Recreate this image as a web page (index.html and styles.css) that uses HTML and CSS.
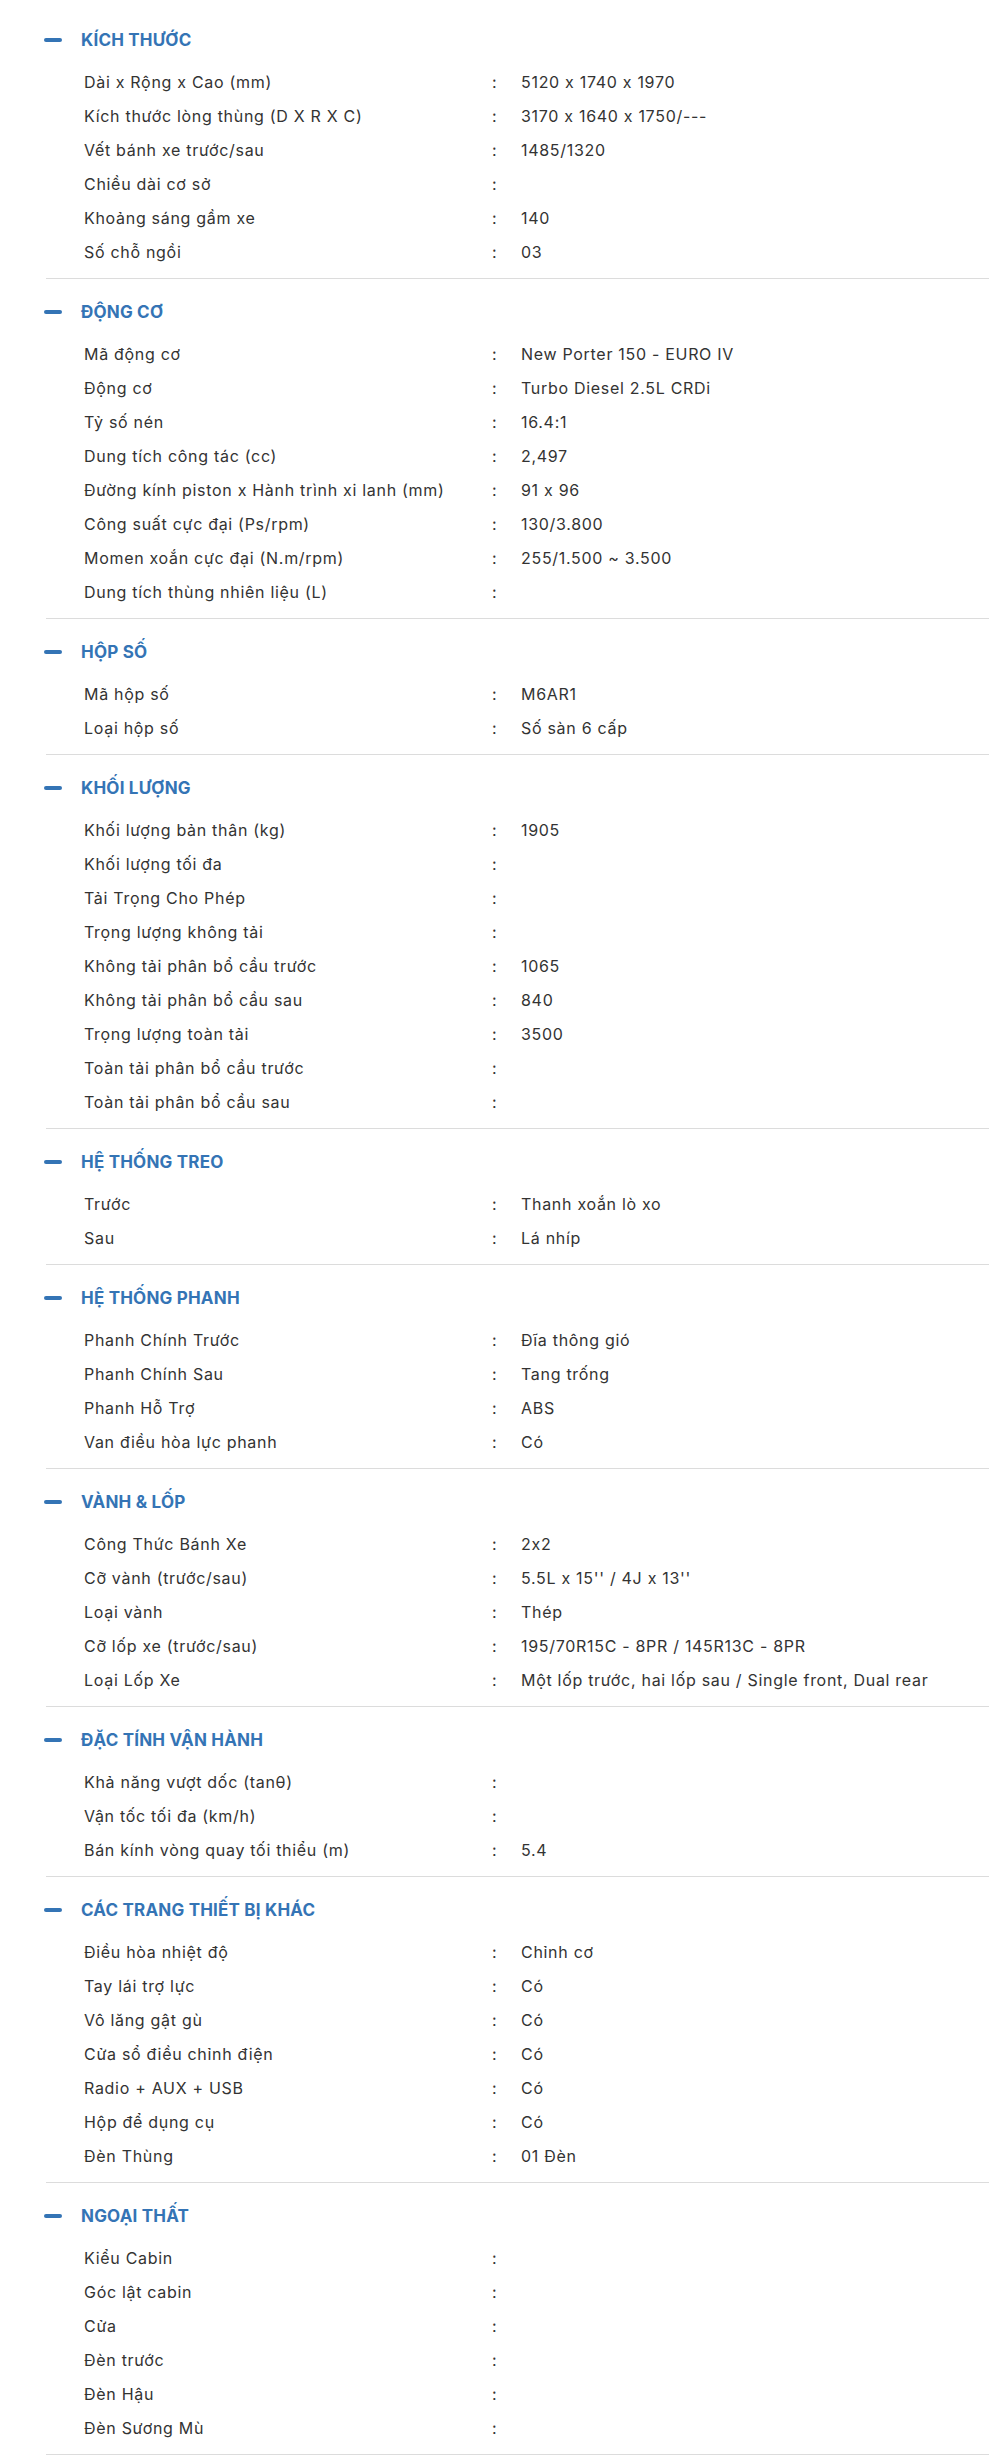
FILE: index.html
```html
<!DOCTYPE html>
<html lang="vi">
<head>
<meta charset="utf-8">
<title>Thông số kỹ thuật</title>
<link rel="stylesheet" href="styles.css">
</head>
<body>
<div class="specs">
  <section class="spec">
    <h2 class="spec-title"><span class="dash"></span>KÍCH THƯỚC</h2>
    <dl class="rows">
      <div class="row"><dt>Dài x Rộng x Cao (mm)</dt><dd>5120 x 1740 x 1970</dd></div>
      <div class="row"><dt>Kích thước lòng thùng (D X R X C)</dt><dd>3170 x 1640 x 1750/---</dd></div>
      <div class="row"><dt>Vết bánh xe trước/sau</dt><dd>1485/1320</dd></div>
      <div class="row"><dt>Chiều dài cơ sở</dt><dd></dd></div>
      <div class="row"><dt>Khoảng sáng gầm xe</dt><dd>140</dd></div>
      <div class="row"><dt>Số chỗ ngồi</dt><dd>03</dd></div>
    </dl>
  </section>
  <section class="spec">
    <h2 class="spec-title"><span class="dash"></span>ĐỘNG CƠ</h2>
    <dl class="rows">
      <div class="row"><dt>Mã động cơ</dt><dd>New Porter 150 - EURO IV</dd></div>
      <div class="row"><dt>Động cơ</dt><dd>Turbo Diesel 2.5L CRDi</dd></div>
      <div class="row"><dt>Tỷ số nén</dt><dd>16.4:1</dd></div>
      <div class="row"><dt>Dung tích công tác (cc)</dt><dd>2,497</dd></div>
      <div class="row"><dt>Đường kính piston x Hành trình xi lanh (mm)</dt><dd>91 x 96</dd></div>
      <div class="row"><dt>Công suất cực đại (Ps/rpm)</dt><dd>130/3.800</dd></div>
      <div class="row"><dt>Momen xoắn cực đại (N.m/rpm)</dt><dd>255/1.500 ~ 3.500</dd></div>
      <div class="row"><dt>Dung tích thùng nhiên liệu (L)</dt><dd></dd></div>
    </dl>
  </section>
  <section class="spec">
    <h2 class="spec-title"><span class="dash"></span>HỘP SỐ</h2>
    <dl class="rows">
      <div class="row"><dt>Mã hộp số</dt><dd>M6AR1</dd></div>
      <div class="row"><dt>Loại hộp số</dt><dd>Số sàn 6 cấp</dd></div>
    </dl>
  </section>
  <section class="spec">
    <h2 class="spec-title"><span class="dash"></span>KHỐI LƯỢNG</h2>
    <dl class="rows">
      <div class="row"><dt>Khối lượng bản thân (kg)</dt><dd>1905</dd></div>
      <div class="row"><dt>Khối lượng tối đa</dt><dd></dd></div>
      <div class="row"><dt>Tải Trọng Cho Phép</dt><dd></dd></div>
      <div class="row"><dt>Trọng lượng không tải</dt><dd></dd></div>
      <div class="row"><dt>Không tải phân bổ cầu trước</dt><dd>1065</dd></div>
      <div class="row"><dt>Không tải phân bổ cầu sau</dt><dd>840</dd></div>
      <div class="row"><dt>Trọng lượng toàn tải</dt><dd>3500</dd></div>
      <div class="row"><dt>Toàn tải phân bổ cầu trước</dt><dd></dd></div>
      <div class="row"><dt>Toàn tải phân bổ cầu sau</dt><dd></dd></div>
    </dl>
  </section>
  <section class="spec">
    <h2 class="spec-title"><span class="dash"></span>HỆ THỐNG TREO</h2>
    <dl class="rows">
      <div class="row"><dt>Trước</dt><dd>Thanh xoắn lò xo</dd></div>
      <div class="row"><dt>Sau</dt><dd>Lá nhíp</dd></div>
    </dl>
  </section>
  <section class="spec">
    <h2 class="spec-title"><span class="dash"></span>HỆ THỐNG PHANH</h2>
    <dl class="rows">
      <div class="row"><dt>Phanh Chính Trước</dt><dd>Đĩa thông gió</dd></div>
      <div class="row"><dt>Phanh Chính Sau</dt><dd>Tang trống</dd></div>
      <div class="row"><dt>Phanh Hỗ Trợ</dt><dd>ABS</dd></div>
      <div class="row"><dt>Van điều hòa lực phanh</dt><dd>Có</dd></div>
    </dl>
  </section>
  <section class="spec">
    <h2 class="spec-title"><span class="dash"></span>VÀNH &amp; LỐP</h2>
    <dl class="rows">
      <div class="row"><dt>Công Thức Bánh Xe</dt><dd>2x2</dd></div>
      <div class="row"><dt>Cỡ vành (trước/sau)</dt><dd>5.5L x 15'' / 4J x 13''</dd></div>
      <div class="row"><dt>Loại vành</dt><dd>Thép</dd></div>
      <div class="row"><dt>Cỡ lốp xe (trước/sau)</dt><dd>195/70R15C - 8PR / 145R13C - 8PR</dd></div>
      <div class="row"><dt>Loại Lốp Xe</dt><dd>Một lốp trước, hai lốp sau / Single front, Dual rear</dd></div>
    </dl>
  </section>
  <section class="spec">
    <h2 class="spec-title"><span class="dash"></span>ĐẶC TÍNH VẬN HÀNH</h2>
    <dl class="rows">
      <div class="row"><dt>Khả năng vượt dốc (tanθ)</dt><dd></dd></div>
      <div class="row"><dt>Vận tốc tối đa (km/h)</dt><dd></dd></div>
      <div class="row"><dt>Bán kính vòng quay tối thiểu (m)</dt><dd>5.4</dd></div>
    </dl>
  </section>
  <section class="spec">
    <h2 class="spec-title"><span class="dash"></span>CÁC TRANG THIẾT BỊ KHÁC</h2>
    <dl class="rows">
      <div class="row"><dt>Điều hòa nhiệt độ</dt><dd>Chỉnh cơ</dd></div>
      <div class="row"><dt>Tay lái trợ lực</dt><dd>Có</dd></div>
      <div class="row"><dt>Vô lăng gật gù</dt><dd>Có</dd></div>
      <div class="row"><dt>Cửa sổ điều chỉnh điện</dt><dd>Có</dd></div>
      <div class="row"><dt>Radio + AUX + USB</dt><dd>Có</dd></div>
      <div class="row"><dt>Hộp để dụng cụ</dt><dd>Có</dd></div>
      <div class="row"><dt>Đèn Thùng</dt><dd>01 Đèn</dd></div>
    </dl>
  </section>
  <section class="spec">
    <h2 class="spec-title"><span class="dash"></span>NGOẠI THẤT</h2>
    <dl class="rows">
      <div class="row"><dt>Kiểu Cabin</dt><dd></dd></div>
      <div class="row"><dt>Góc lật cabin</dt><dd></dd></div>
      <div class="row"><dt>Cửa</dt><dd></dd></div>
      <div class="row"><dt>Đèn trước</dt><dd></dd></div>
      <div class="row"><dt>Đèn Hậu</dt><dd></dd></div>
      <div class="row"><dt>Đèn Sương Mù</dt><dd></dd></div>
    </dl>
  </section>
</div>
</body>
</html>
```

FILE: styles.css
```css
html, body {
  margin: 0;
  padding: 0;
  background: #ffffff;
}

body {
  font-family: Inter, "Noto Sans", "Liberation Sans", sans-serif;
  font-feature-settings: "calt" 0;
  color: #333333;
}

.specs {
  padding: 7px 0 0 46px;
}

.spec {
  border-bottom: 1px solid #dcdcdc;
  padding: 21px 0 9px 0;
}

.spec-title {
  display: flex;
  align-items: center;
  margin: 0;
  height: 24px;
  font-size: 17px;
  font-weight: 700;
  line-height: 24px;
  letter-spacing: 0.2px;
  color: #3474b5;
}

.dash {
  display: block;
  width: 18px;
  height: 4px;
  border-radius: 2px;
  background: #3474b5;
  margin: 0 19px 0 -2px;
}

.rows {
  margin: 13px 0 0 38px;
  padding: 0;
}

.row {
  display: grid;
  grid-template-columns: 408px 29px 1fr;
  height: 34px;
  line-height: 34px;
  font-size: 16px;
  letter-spacing: 0.7px;
  color: #333333;
}

.row dt {
  grid-column: 1;
  white-space: nowrap;
}

.row dd {
  grid-column: 3;
  margin: 0;
  white-space: nowrap;
  position: relative;
}

.row dd::before {
  content: ":";
  position: absolute;
  left: -29px;
  top: 0;
}
```
